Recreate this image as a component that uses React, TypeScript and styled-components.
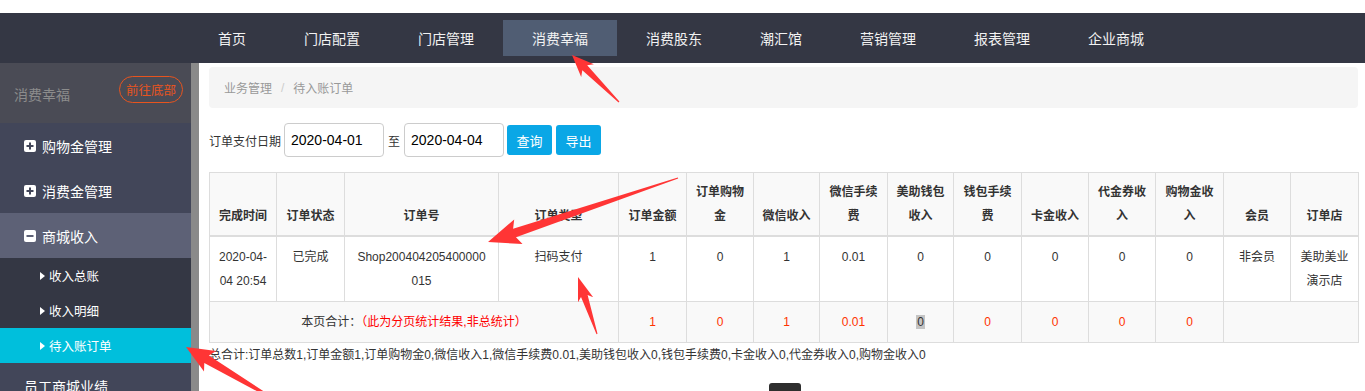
import React from "react";
import styled, { createGlobalStyle } from "styled-components";

const GlobalStyle = createGlobalStyle`
  html, body { margin: 0; padding: 0; background: #fff; }
  body {
    width: 1365px; height: 391px; overflow: hidden;
    font-family: "Liberation Sans", "Noto Sans CJK SC", sans-serif;
    color: #333;
  }
  * { box-sizing: border-box; }
`;

const Page = styled.div`
  position: relative;
  width: 1365px;
  height: 391px;
  padding-top: 13px;
  overflow: hidden;
`;

const NavBar = styled.nav`
  height: 50px;
  background: #343744;
  display: flex;
  align-items: center;
  padding-left: 189px;
`;

const NavItem = styled.div<{ $active?: boolean }>`
  height: 36px;
  padding: 0 29px 0 29px;
  display: flex;
  align-items: center;
  font-size: 14px;
  color: #f2f2f2;
  background: ${(p) => (p.$active ? "#505d73" : "transparent")};
`;

const Body = styled.div`
  display: flex;
  height: 328px;
  overflow: hidden;
`;

const Sidebar = styled.aside`
  width: 191px;
  flex: none;
  background: #424659;
  overflow: hidden;
`;

const SideHeader = styled.div`
  height: 60px;
  background: #4a4b55;
  display: flex;
  align-items: center;
  justify-content: space-between;
  padding: 0 8px 0 14px;
`;

const SideTitle = styled.span`
  font-size: 14px;
  color: #8c8c8c;
  margin-top: 1px;
`;

const BottomButton = styled.span`
  height: 27px;
  padding: 0 6px;
  border: 1px solid #e8541e;
  border-radius: 14px;
  color: #e8541e;
  font-size: 12.5px;
  display: flex;
  align-items: center;
  margin-top: -7px;
`;

const MenuItem = styled.div<{ $open?: boolean }>`
  height: 45px;
  display: flex;
  align-items: center;
  gap: 6px;
  padding-left: 24px;
  font-size: 14px;
  color: #fff;
  background: ${(p) => (p.$open ? "#5d6176" : "#424659")};
`;

const SubItem = styled.div<{ $active?: boolean }>`
  height: 35px;
  display: flex;
  align-items: center;
  gap: 4px;
  padding-left: 40px;
  font-size: 12.5px;
  color: #fff;
  background: ${(p) => (p.$active ? "#00bfdc" : "#343744")};
`;

const ScrollTrack = styled.div`
  width: 8px;
  flex: none;
  background: #8a8a8a;
`;

const Main = styled.main`
  flex: 1;
  min-width: 0;
  padding: 4px 7px 0 10px;
`;

const Breadcrumb = styled.div`
  height: 41px;
  background: #f5f5f5;
  border-radius: 4px;
  display: flex;
  align-items: center;
  padding-left: 15px;
  font-size: 12px;
  color: #999;
`;

const Sep = styled.span`
  color: #ccc;
  margin: 0 9px;
`;

const FilterRow = styled.div`
  margin-top: 15px;
  display: flex;
  align-items: center;
  font-size: 12px;
  color: #333;
`;

const DateInput = styled.div`
  width: 100px;
  height: 34px;
  border: 1px solid #ccc;
  border-radius: 4px;
  display: flex;
  align-items: center;
  padding-left: 6px;
  font-size: 14px;
  color: #000;
  margin-left: 3px;
`;

const To = styled.span`
  margin: 0 1px 0 4px;
`;

const Btn = styled.span<{ $first?: boolean }>`
  width: 45px;
  height: 30px;
  margin-left: ${(p) => (p.$first ? "3px" : "4px")};
  border-radius: 3px;
  background: #0aa7e6;
  color: #fff;
  font-size: 13px;
  display: flex;
  align-items: center;
  justify-content: center;
`;

const Table = styled.table`
  margin-top: 15px;
  width: 1149px;
  table-layout: fixed;
  border-collapse: collapse;
  font-size: 12px;
  line-height: 24px;
  text-align: center;
`;

const Th = styled.th`
  border: 1px solid #ddd;
  border-bottom: 2px solid #ddd;
  background: #f9f9f9;
  padding: 7px 8px;
  vertical-align: bottom;
  font-weight: bold;
  color: #333;
`;

const Td = styled.td<{ $tone?: "red" | "plain"; $shade?: boolean }>`
  border: 1px solid #ddd;
  padding: 8px 8px;
  vertical-align: top;
  font-weight: normal;
  color: ${(p) => (p.$tone === "red" ? "#ff3300" : "#333")};
  background: ${(p) => (p.$shade ? "#f9f9f9" : "#fff")};
`;

const RedNote = styled.span`
  color: #f00;
`;

const Selected = styled.span`
  background: #c4c4c4;
  color: #333;
  padding: 0 1px;
`;

const Summary = styled.div`
  font-size: 12px;
  line-height: 24px;
  color: #333;
`;

const Pager = styled.div`
  margin-top: 16px;
  display: flex;
  justify-content: center;
  padding-left: 2px;
`;

const PageBox = styled.span`
  width: 32px;
  height: 32px;
  background: #2e2e2e;
  border-radius: 3px;
`;

const Overlay = styled.svg`
  position: absolute;
  left: 0;
  top: 0;
  pointer-events: none;
`;

const PlusBox = ({ minus }: { minus?: boolean }) => (
  <svg width="12" height="12" viewBox="0 0 12 12">
    <rect x="0" y="0" width="12" height="12" rx="2" fill="#fff" />
    <rect x="2.5" y="5" width="7" height="2" fill={minus ? "#5d6176" : "#424659"} />
    {!minus && <rect x="5" y="2.5" width="2" height="7" fill="#424659" />}
  </svg>
);

const Caret = () => (
  <svg width="5" height="8" viewBox="0 0 5 8">
    <path d="M0 0 L5 4 L0 8 Z" fill="#fff" />
  </svg>
);

function arrowPoints(
  x1: number, y1: number, x2: number, y2: number,
  headLen: number, headW: number, tailW: number, neckW: number
) {
  const dx = x2 - x1;
  const dy = y2 - y1;
  const L = Math.hypot(dx, dy);
  const ux = dx / L;
  const uy = dy / L;
  const px = -uy;
  const py = ux;
  const bx = x2 - ux * headLen;
  const by = y2 - uy * headLen;
  const nx = bx + ux * 4;
  const ny = by + uy * 4;
  const pts: [number, number][] = [
    [x1 + (px * tailW) / 2, y1 + (py * tailW) / 2],
    [nx + (px * neckW) / 2, ny + (py * neckW) / 2],
    [bx + (px * headW) / 2, by + (py * headW) / 2],
    [x2, y2],
    [bx - (px * headW) / 2, by - (py * headW) / 2],
    [nx - (px * neckW) / 2, ny - (py * neckW) / 2],
    [x1 - (px * tailW) / 2, y1 - (py * tailW) / 2],
  ];
  return pts.map((p) => p.map((v) => v.toFixed(1)).join(",")).join(" ");
}

const arrows = [
  arrowPoints(619, 102, 572, 55, 22, 18, 1, 7),
  arrowPoints(678, 178, 488, 242, 32, 26, 1, 9),
  arrowPoints(597, 334, 578, 277, 24, 16, 1, 7),
  arrowPoints(272, 398, 186, 347, 28, 24, 2, 9),
];

const navItems = ["首页", "门店配置", "门店管理", "消费幸福", "消费股东", "潮汇馆", "营销管理", "报表管理", "企业商城"];

const colWidths = [67, 68, 154, 120, 68, 67, 66, 68, 66, 68, 67, 67, 68, 67, 68];
const headers = ["完成时间", "订单状态", "订单号", "订单类型", "订单金额", "订单购物金", "微信收入", "微信手续费", "美助钱包收入", "钱包手续费", "卡金收入", "代金券收入", "购物金收入", "会员", "订单店"];
const moneyValues = ["1", "0", "1", "0.01", "0", "0", "0", "0", "0"];
const totalValues = ["1", "0", "1", "0.01", "0", "0", "0", "0", "0"];

export default function App() {
  return (
    <>
      <GlobalStyle />
      <Page>
        <NavBar>
          {navItems.map((n) => (
            <NavItem key={n} $active={n === "消费幸福"}>{n}</NavItem>
          ))}
        </NavBar>
        <Body>
          <Sidebar>
            <SideHeader>
              <SideTitle>消费幸福</SideTitle>
              <BottomButton>前往底部</BottomButton>
            </SideHeader>
            <MenuItem><PlusBox />购物金管理</MenuItem>
            <MenuItem><PlusBox />消费金管理</MenuItem>
            <MenuItem $open><PlusBox minus />商城收入</MenuItem>
            <SubItem><Caret />收入总账</SubItem>
            <SubItem><Caret />收入明细</SubItem>
            <SubItem $active><Caret />待入账订单</SubItem>
            <MenuItem>员工商城业绩</MenuItem>
          </Sidebar>
          <ScrollTrack />
          <Main>
            <Breadcrumb>
              业务管理<Sep>/</Sep>待入账订单
            </Breadcrumb>
            <FilterRow>
              订单支付日期
              <DateInput>2020-04-01</DateInput>
              <To>至</To>
              <DateInput>2020-04-04</DateInput>
              <Btn $first>查询</Btn>
              <Btn>导出</Btn>
            </FilterRow>
            <Table>
              <colgroup>
                {colWidths.map((w, i) => (
                  <col key={i} style={{ width: w }} />
                ))}
              </colgroup>
              <thead>
                <tr>
                  {headers.map((h) => (
                    <Th key={h}>{h}</Th>
                  ))}
                </tr>
              </thead>
              <tbody>
                <tr>
                  <Td>2020-04-<br />04 20:54</Td>
                  <Td>已完成</Td>
                  <Td>Shop200404205400000<br />015</Td>
                  <Td>扫码支付</Td>
                  {moneyValues.map((v, i) => (
                    <Td key={i}>{v}</Td>
                  ))}
                  <Td>非会员</Td>
                  <Td>美助美业演示店</Td>
                </tr>
                <tr>
                  <Td $shade colSpan={4}>
                    本页合计：<RedNote>（此为分页统计结果,非总统计）</RedNote>
                  </Td>
                  {totalValues.map((v, i) =>
                    i === 4 ? (
                      <Td key={i} $shade><Selected>{v}</Selected></Td>
                    ) : (
                      <Td key={i} $shade $tone="red">{v}</Td>
                    )
                  )}
                  <Td $shade colSpan={2}></Td>
                </tr>
              </tbody>
            </Table>
            <Summary>
              总合计:订单总数1,订单金额1,订单购物金0,微信收入1,微信手续费0.01,美助钱包收入0,钱包手续费0,卡金收入0,代金券收入0,购物金收入0
            </Summary>
            <Pager>
              <PageBox />
            </Pager>
          </Main>
        </Body>
        <Overlay width="1365" height="391" viewBox="0 0 1365 391">
          {arrows.map((pts, i) => (
            <polygon key={i} points={pts} fill="#ff3535" />
          ))}
        </Overlay>
      </Page>
    </>
  );
}
